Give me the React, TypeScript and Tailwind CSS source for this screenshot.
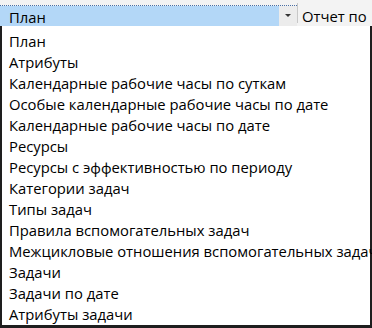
const items = [
  'План',
  'Атрибуты',
  'Календарные рабочие часы по суткам',
  'Особые календарные рабочие часы по дате',
  'Календарные рабочие часы по дате',
  'Ресурсы',
  'Ресурсы с эффективностью по периоду',
  'Категории задач',
  'Типы задач',
  'Правила вспомогательных задач',
  'Межцикловые отношения вспомогательных задач',
  'Задачи',
  'Задачи по дате',
  'Атрибуты задачи',
];

export default function App() {
  return (
    <div className="h-[328px] w-[372px] overflow-hidden bg-white font-['Open_Sans',sans-serif] text-black">
      <div className="flex h-[26px] bg-[#f3f3f3]">
        <div className="mt-[5px] flex w-[297px] border-t border-dotted border-[#4a6fa5]">
          <div className="flex flex-1 items-center bg-[#b3d7f7] pl-[9px] pt-[2px] text-[14.8px] leading-none">План</div>
          <div className="flex w-[18px] items-center justify-center bg-[#ececec]">
            <svg width="6" height="4" viewBox="0 0 6 4">
              <path d="M0 0h6L3 3z" fill="#333" />
            </svg>
          </div>
        </div>
        <div className="my-[3px] w-px bg-[#c8c8c8]" />
        <div className="flex flex-1 items-center whitespace-nowrap pl-[4px] pt-[7px] text-[14.8px] leading-none">Отчет по</div>
      </div>
      <div className="h-[302px] border-x-[2px] border-b-[3px] border-[#1e1e1e] bg-white pl-[7px] pt-[5px]">
        <ul>
          {items.map((t) => (
            <li key={t} className="h-[21px] whitespace-nowrap text-[14.8px] leading-[21px]">
              {t}
            </li>
          ))}
        </ul>
      </div>
    </div>
  );
}
